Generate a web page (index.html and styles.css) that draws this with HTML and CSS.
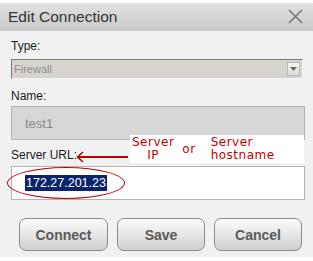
FILE: index.html
```html
<!DOCTYPE html>
<html>
<head>
<meta charset="utf-8">
<link rel="stylesheet" href="styles.css">
</head>
<body>
<div class="dialog">
  <div class="titlebar">
    <span class="title">Edit Connection</span>
    <svg class="close" width="15" height="15" viewBox="0 0 15 15"><path d="M1 1 L14 14 M14 1 L1 14" stroke="#7a7a7a" stroke-width="1.7" fill="none"/></svg>
  </div>
  <div class="content">
    <div class="label lbl-type">Type:</div>
    <div class="select">
      <span class="select-text">Firewall</span>
      <span class="select-btn"><svg width="7" height="4" viewBox="0 0 7 4"><path d="M0 0 H7 L3.5 4 Z" fill="#666"/></svg></span>
    </div>
    <div class="label lbl-name">Name:</div>
    <div class="field disabled">test1</div>
    <div class="url-row">
      <div class="label lbl-url">Server URL:</div>
      <svg class="arrow" width="52" height="12" viewBox="0 0 52 12"><path d="M2 6 H52" stroke="#c00000" stroke-width="2"/><path d="M7 1 L1.5 6 L7 11" stroke="#c00000" stroke-width="1.5" fill="none"/></svg>
      <div class="note">
        <div class="note-col first"><span>Server</span><span>IP</span></div>
        <div class="note-or">or</div>
        <div class="note-col second"><span>Server</span><span>hostname</span></div>
      </div>
    </div>
    <div class="field url">
      <span class="sel">172.27.201.23</span>
      <span class="ellipse"></span>
    </div>
    <div class="buttons">
      <button class="btn">Connect</button>
      <button class="btn">Save</button>
      <button class="btn">Cancel</button>
    </div>
  </div>
</div>
</body>
</html>
```

FILE: styles.css
```css
html, body {
  margin: 0;
  padding: 0;
  background: #ffffff;
}
body {
  font-family: "Liberation Sans", Arial, sans-serif;
  width: 313px;
  height: 261px;
  overflow: hidden;
}
.dialog {
  margin-top: 3px;
  height: 254px;
  background: #f1f1f1;
}
.titlebar {
  height: 28px;
  background: linear-gradient(#e2e2e2, #c9c9c9);
  display: flex;
  align-items: center;
  justify-content: space-between;
  padding: 0 10px 0 8px;
  box-sizing: border-box;
}
.title {
  font-size: 15.5px;
  color: #333;
  margin-top: -1px;
}
.close {
  display: block;
  margin-top: -1px;
}
.content {
  padding: 0 8px 0 11px;
  display: flex;
  flex-direction: column;
}
.label {
  font-size: 12px;
  line-height: 14px;
  color: #1a1a1a;
}
.lbl-type { margin-top: 8px; }
.select {
  margin-top: 6px;
  height: 20px;
  width: 292px;
  box-sizing: border-box;
  background: #d7d4ce;
  border-top: 1px solid #7a7a7a;
  border-left: 1px solid #7a7a7a;
  border-bottom: 1px solid #f4f4f4;
  border-right: 1px solid #f4f4f4;
  display: flex;
  align-items: center;
  justify-content: space-between;
  padding: 0 2px 0 2px;
}
.select-text {
  font-size: 11px;
  color: #8e8e8e;
}
.select-btn {
  width: 13px;
  height: 14px;
  box-sizing: border-box;
  border: 1px solid #b9b9b9;
  background: linear-gradient(#f4f4f4, #dcdcdc);
  display: flex;
  align-items: center;
  justify-content: center;
}
.select-btn svg { display: block; }
.lbl-name { margin-top: 10px; }
.field {
  margin-top: 3px;
  height: 34px;
  width: 294px;
  box-sizing: border-box;
  border: 1px solid #b4b4b4;
  display: flex;
  align-items: center;
  padding-left: 13px;
}
.disabled {
  background: #d7d7d7;
  color: #8a8a8a;
  font-size: 13px;
}
.url-row {
  margin-top: 8px;
  height: 14px;
  position: relative;
  display: flex;
  align-items: center;
}
.arrow {
  display: block;
  margin-left: -1px;
  margin-top: 3px;
}
.note {
  position: absolute;
  left: 119px;
  top: -13px;
  width: 174px;
  height: 28px;
  background: #ffffff;
  display: flex;
  align-items: center;
  font-family: "DejaVu Sans", Verdana, sans-serif;
  font-size: 12px;
  color: #c00000;
  letter-spacing: 0.5px;
}
.note-col {
  display: flex;
  flex-direction: column;
  line-height: 13px;
}
.note-col.first {
  align-items: center;
  margin-left: 2px;
}
.note-col.second {
  align-items: flex-start;
}
.note-or {
  margin: 0 15px 0 8px;
  line-height: 13px;
}
.url {
  margin-top: 4px;
  background: #ffffff;
  position: relative;
}
.sel {
  background: #0a246a;
  color: #ffffff;
  font-size: 12.5px;
  line-height: 16px;
  padding: 0 1px;
}
.ellipse {
  position: absolute;
  left: -5px;
  top: 0px;
  width: 118px;
  height: 32px;
  border: 1px solid #c00000;
  border-radius: 50%;
  box-sizing: border-box;
}
.buttons {
  margin-top: 18px;
  margin-left: 8px;
  margin-right: 2px;
  display: grid;
  grid-template-columns: 89px 88px 88px;
  column-gap: 9px;
}
.btn {
  height: 33px;
  border: 1px solid #8c8c8c;
  border-radius: 7px;
  background: linear-gradient(#fbfbfb, #e6e6e6 50%, #cfcfcf);
  font-family: "Liberation Sans", Arial, sans-serif;
  font-weight: bold;
  font-size: 14px;
  color: #5a5a5a;
  padding: 0;
}
```
